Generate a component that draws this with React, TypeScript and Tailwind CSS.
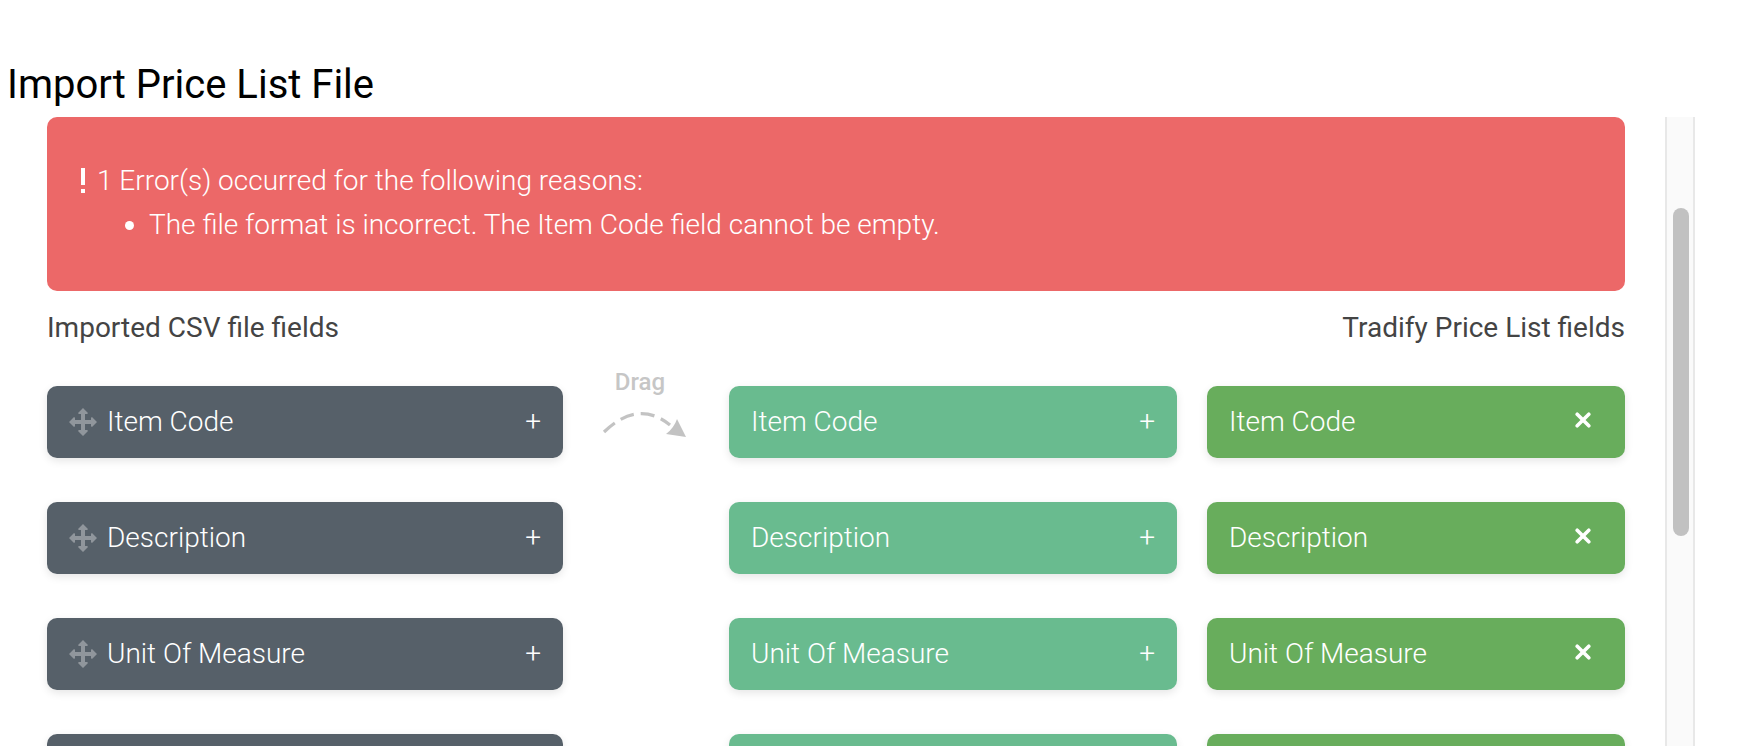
import React from "react";

const fields = ["Item Code", "Description", "Unit Of Measure"];

const columns = "grid grid-cols-[516fr_166fr_448fr_30fr_418fr]";
const card =
  "flex h-[72px] items-center rounded-[10px] text-[28px] font-light leading-8 text-white shadow-[0_3px_8px_rgba(0,0,0,0.1)]";

function MoveIcon() {
  return (
    <svg className="mr-[10px] size-7 shrink-0" viewBox="0 0 28 28" fill="#90969c" aria-hidden="true">
      <path d="M14 0l5 5-.8 1H16v6h6V9.8l1-.8 5 5-5 5-1-.8V16h-6v6h2.2l.8 1-5 5-5-5 .8-1H12v-6H6v2.2L5 19l-5-5 5-5 1 .8V12h6V6H9.8L9 5z" />
    </svg>
  );
}

function CrossIcon() {
  return (
    <svg className="size-4" viewBox="0 0 16 16" stroke="#fff" strokeWidth="3.6" strokeLinecap="round" aria-hidden="true">
      <path d="M2.2 2.2l11.6 11.6M13.8 2.2L2.2 13.8" />
    </svg>
  );
}

function DragHint() {
  return (
    <div className="-mt-5 flex h-[72px] flex-col items-center pr-3">
      <span className="text-[24px] font-medium leading-8 text-[#c6c6c6]">Drag</span>
      <svg className="mt-3 h-[30px] w-[92px] shrink-0" viewBox="0 0 92 30" fill="none" aria-hidden="true">
        <path d="M10 22Q44 -11 76 15" stroke="#c3c3c3" strokeWidth="3.2" strokeDasharray="14 7" />
        <path d="M83 9L92 27L72 24Q80 18 83 9Z" fill="#c3c3c3" />
      </svg>
    </div>
  );
}

export default function App() {
  return (
    <div className="flex h-screen flex-col overflow-hidden bg-white font-['Roboto',sans-serif]">
      <h1 className="px-[7px] pt-[61px] pb-2 text-[40px] leading-[48px] text-black">Import Price List File</h1>
      <div className="flex min-h-0 flex-1 pr-[49px]">
        <main className="min-w-0 flex-1 overflow-hidden pr-10 pl-[47px]">
          <section
            role="alert"
            className="h-[174px] rounded-[10px] bg-[#ec6868] px-[30px] pt-[42px] text-[28px] font-light leading-[44px] text-white"
          >
            <p className="flex items-center">
              <svg className="mr-2 h-[26px] w-3" viewBox="0 0 12 26" fill="#fff" aria-hidden="true">
                <path d="M4 0h4v17H4zM4 21h4v4H4z" />
              </svg>
              1 Error(s) occurred for the following reasons:
            </p>
            <ul className="list-disc pl-[72px]">
              <li>The file format is incorrect. The Item Code field cannot be empty.</li>
            </ul>
          </section>
          <div className="flex justify-between pt-[21px] pb-[42px] text-[28px] leading-8 text-[#444]">
            <h2>Imported CSV file fields</h2>
            <h2>Tradify Price List fields</h2>
          </div>
          <ul className="flex flex-col gap-11">
            {fields.map((name, i) => (
              <li key={name} className={columns}>
                <div className={`${card} bg-[#566069] px-[22px]`}>
                  <MoveIcon />
                  <span className="flex-1">{name}</span>
                  <button type="button" aria-label={`Add ${name}`}>+</button>
                </div>
                <div>{i === 0 && <DragHint />}</div>
                <div className={`${card} bg-[#69bb8f] px-[22px]`}>
                  <span className="flex-1">{name}</span>
                  <button type="button" aria-label={`Map ${name}`}>+</button>
                </div>
                <div />
                <div className={`${card} bg-[#68ad5c] pr-[34px] pl-[22px]`}>
                  <span className="flex-1">{name}</span>
                  <button type="button" className="pb-1" aria-label={`Remove ${name}`}>
                    <CrossIcon />
                  </button>
                </div>
              </li>
            ))}
            <li className={columns}>
              <div className={`${card} bg-[#566069]`} />
              <div />
              <div className={`${card} bg-[#69bb8f]`} />
              <div />
              <div className={`${card} bg-[#68ad5c]`} />
            </li>
          </ul>
        </main>
        <div
          className="flex w-[30px] flex-col items-center border-x-2 border-[#e8e8e8] bg-[#fafafa] pl-[2px]"
          aria-hidden="true"
        >
          <div className="grow-[91]" />
          <div className="w-4 grow-[328] rounded-full bg-[#c1c1c1]" />
          <div className="grow-[210]" />
        </div>
      </div>
    </div>
  );
}
